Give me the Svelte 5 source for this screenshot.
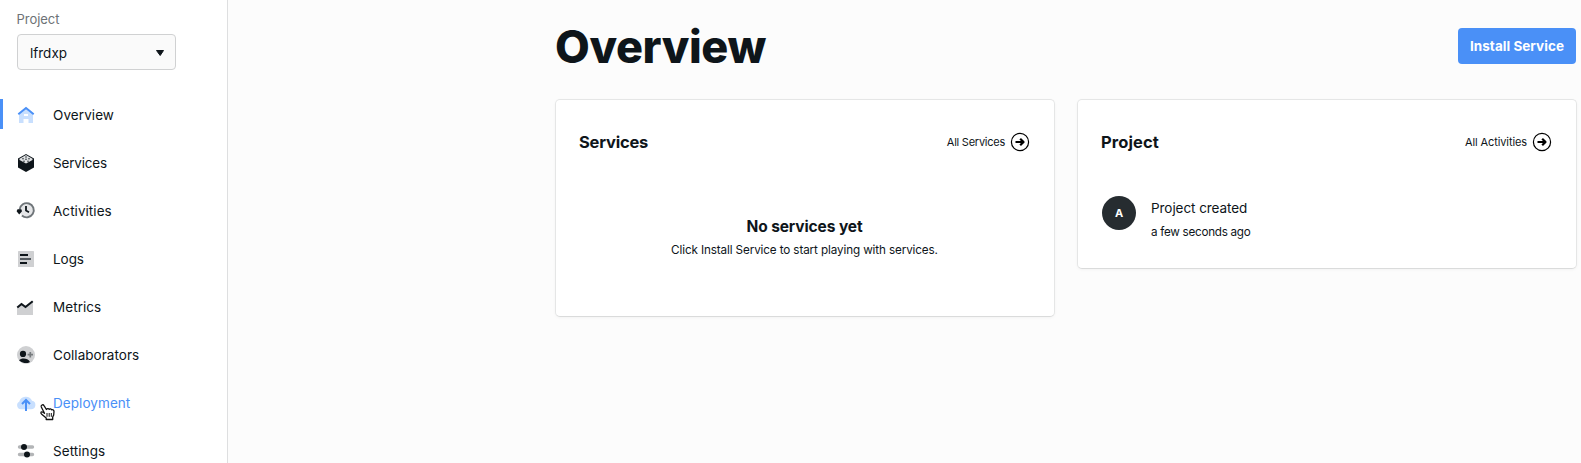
<script>
  const nav = [
    { name: 'Overview', icon: 'home', spacing: 0.08, active: true },
    { name: 'Services', icon: 'box', spacing: -0.17 },
    { name: 'Activities', icon: 'history', spacing: 0.05 },
    { name: 'Logs', icon: 'logs', spacing: -0.05 },
    { name: 'Metrics', icon: 'chart', spacing: 0.05 },
    { name: 'Collaborators', icon: 'person', spacing: 0.04 },
    { name: 'Deployment', icon: 'cloud', spacing: 0.07, hover: true },
    { name: 'Settings', icon: 'sliders', spacing: 0.06 }
  ];
</script>

{#snippet arrow()}
  <svg class="arrow" viewBox="0 0 20 20" aria-hidden="true">
    <circle cx="10" cy="10" r="8.6" fill="none" stroke="#000" stroke-width="1.2" />
    <path d="M5.500 10H13M10.200 6.700L13.500 10l-3.300 3.300" fill="none" stroke="#000" stroke-width="2.200" stroke-linejoin="round" />
  </svg>
{/snippet}

{#snippet glyph(kind)}
  <svg class="glyph" viewBox="0 0 20 20" aria-hidden="true">
    {#if kind === 'home'}
      <path d="M3 8.500L10 3l7 5.500V18h-4.500v-4h-5v4H3z" fill="#c8dffe" />
      <path d="M8 9h4v2H8z" fill="#fff" />
      <path d="M2.300 9.200L10 3l7.700 6.200" fill="none" stroke="#4a90f7" stroke-width="2" />
    {:else if kind === 'box'}
      <path d="M10 1l8 4.400v9L10 19l-8-4.600v-9z" fill="#0e151a" />
      <path d="M10 2l6.500 3.700v1.200L10 10.600 3.500 6.900V5.700z" fill="#dfe1e3" />
      <g fill="#0e151a" opacity=".85"><circle cx="10" cy="4" r=".8" /><circle cx="7" cy="5.800" r=".8" /><circle cx="13" cy="5.800" r=".8" /><circle cx="10" cy="6.300" r=".8" /><circle cx="8" cy="8.200" r=".8" /><circle cx="12" cy="8.200" r=".8" /></g>
    {:else if kind === 'history'}
      <circle cx="10.500" cy="9" r="7" fill="#e5e6e8" />
      <path d="M3.600 8.500a7.100 7.100 0 1 1 2.300 6" fill="none" stroke="#6f7579" stroke-width="1.900" />
      <path d="M1.500 8.200h3.800l.7 2-2.800 3.200-2.600-3.200z" fill="#0e151a" />
      <path d="M10 5v4.600l3 1.700" fill="none" stroke="#0e151a" stroke-width="1.800" />
    {:else if kind === 'logs'}
      <rect x="2" y="2" width="16" height="16" rx=".6" fill="#cfd0d2" />
      <path d="M4 6h8M4 14h7" stroke="#0e151a" stroke-width="2" />
      <path d="M4 10h11" stroke="#555b60" stroke-width="2" />
    {:else if kind === 'chart'}
      <path d="M1 10l5-3 4 3 7-6v14H1z" fill="#cfd0d2" />
      <path d="M1.300 10.500L5.500 7l4 3L16.700 4.200" fill="none" stroke="#0e151a" stroke-width="2.100" />
    {:else if kind === 'person'}
      <circle cx="10" cy="10" r="9" fill="#cfd0d2" />
      <circle cx="7" cy="8.900" r="3.100" fill="#0e151a" />
      <path d="M3 15.300c2.500-2.500 8.500-2.500 11 1.600A9 9 0 0 1 3 15.300z" fill="#0e151a" />
      <path d="M14.300 7v5.400M11.600 9.700h5.400" stroke="#777b7e" stroke-width="1.700" />
    {:else if kind === 'cloud'}
      <path d="M5 16.200A4 4 0 0 1 3.200 8.700 6.800 6.800 0 0 1 16 7.700 4.300 4.300 0 0 1 15 16.200z" fill="#c8dffe" />
      <path d="M10 18V7.300M6 11l4-4 4 4" fill="none" stroke="#4a90f7" stroke-width="2" />
    {:else}
      <path d="M3.500 6h13M3.500 13.500h13" stroke="#b3b5b7" stroke-width="3.400" stroke-linecap="round" />
      <circle cx="8" cy="6" r="3" fill="#0e151a" /><circle cx="11" cy="13.500" r="3" fill="#0e151a" />
    {/if}
  </svg>
{/snippet}

<div class="app">
  <aside>
    <div class="label">Project</div>
    <button class="select"><span>lfrdxp</span><svg width="10" height="8" viewBox="0 0 10 8"><path d="M1.500 1.500h7L5.200 6.500z" fill="#0e151a" stroke="#0e151a" stroke-linejoin="round" /></svg></button>
    <nav>
      {#each nav as item}
        <div class="item" class:active={item.active} class:hover={item.hover}>
          {@render glyph(item.icon)}
          <span style="letter-spacing: {item.spacing}px">{item.name}</span>
        </div>
      {/each}
    </nav>
    <svg class="pointer" width="18" height="20" viewBox="0 0 18 20" aria-hidden="true">
      <path d="M6.500 12.300L3.300 6C2.500 4.200 5 2.800 6 4.600L8.400 8.500C9 7.300 10.700 7.300 11.100 8.400 11.700 7.400 13.300 7.700 13.600 8.800 15 8.300 16 9.400 16 10.500L15.700 14 14.700 16V18.500H8.200V17L4 13.600C2 12 2.900 10 5 11.200z" fill="#fff" stroke="#111" stroke-width="1.300" stroke-linejoin="round" />
      <path d="M9 12v3.800M11.200 12v3.800M13.300 12v3.800" stroke="#111" />
    </svg>
  </aside>
  <main>
    <header><h1>Overview</h1><button class="install">Install Service</button></header>
    <div class="cards">
      <section class="services">
        <div class="head"><h2 class="sv">Services</h2><div class="link ls">All Services {@render arrow()}</div></div>
        <div class="empty"><h3>No services yet</h3><p>Click Install Service to start playing with services.</p></div>
      </section>
      <section class="project">
        <div class="head"><h2 class="pj">Project</h2><div class="link la">All Activities {@render arrow()}</div></div>
        <div class="event"><div class="avatar">A</div><div><div class="what">Project created</div><div class="when">a few seconds ago</div></div></div>
      </section>
    </div>
  </main>
</div>

<style>
  .app { display: flex; height: 463px; overflow: hidden; font-family: Inter, sans-serif; color: #0e151a; background: #fcfcfc; }
  .app * { box-sizing: border-box; }
  button { font: inherit; border: 0; }
  h1, h2, h3, p { margin: 0; }
  aside { position: relative; width: 228px; flex: none; background: #fff; border-right: 1px solid #dedfe0; padding-top: 10px; }
  .label { padding-left: 16.500px; font-size: 13px; line-height: 19px; color: #6d7276; letter-spacing: -.05px; }
  .select { display: flex; align-items: center; justify-content: space-between; width: 159px; height: 36px; margin: 5px 0 0 17px; padding: 1px 10px 0 12px; border: 1px solid #d0d1d2; border-radius: 4px; background: #fafafa; color: #0e151a; font-size: 13.5px; }
  nav { margin-top: 21px; }
  .item { display: flex; align-items: center; height: 48px; padding-left: 16px; font-size: 13.5px; line-height: 20px; position: relative; }
  .item span { margin-left: 17px; }
  .item.active::before { content: ''; position: absolute; left: 0; top: 8px; width: 3px; height: 30px; background: #4a90f7; }
  .item.hover { color: #4a90f7; }
  .glyph { width: 20px; height: 20px; flex: none; }
  .pointer { position: absolute; left: 38px; top: 401px; }
  main { flex: 1; padding: 28px 4px 0 328px; }
  header { display: flex; justify-content: space-between; align-items: flex-start; height: 71px; }
  h1 { font-size: 45px; font-weight: 800; line-height: 37px; letter-spacing: -.4px; margin-left: -1px; }
  .install { width: 118px; height: 36px; padding: 0 0 1px; margin-right: 1px; border-radius: 4px; background: #4a90f7; color: #fff; font-size: 13.5px; font-weight: 700; letter-spacing: .04px; }
  .cards { display: grid; grid-template-columns: 500px 500px; gap: 22px; align-items: start; margin-left: -1px; }
  section { background: #fff; border: 1px solid #e5e6e6; border-bottom-color: #dadbdb; border-radius: 5px; box-shadow: 0 1px 3px #0000000a; padding: 0 24px 0 23px; }
  .services { height: 218px; }
  .project { height: 170px; }
  .head { display: flex; justify-content: space-between; align-items: center; padding-top: 32px; height: 52px; }
  h2 { font-size: 16.5px; line-height: 20px; }
  .sv { letter-spacing: -.2px; }
  .pj { letter-spacing: .1px; }
  .link { display: flex; align-items: center; gap: 5px; font-size: 11px; line-height: 20px; }
  .ls { letter-spacing: -.25px; }
  .la { letter-spacing: -.1px; }
  .arrow { width: 20px; height: 20px; }
  .empty { text-align: center; padding-top: 65px; }
  h3 { font-size: 15.5px; line-height: 20px; letter-spacing: -.1px; }
  .empty p { font-size: 11.7px; line-height: 16px; letter-spacing: -.12px; margin-top: 5px; }
  .event { display: flex; padding-top: 44px; }
  .avatar { width: 34px; height: 34px; margin-left: 1px; border-radius: 50%; background: #262c30; color: #fff; font-size: 11px; font-weight: 700; line-height: 34px; text-align: center; flex: none; }
  .event > div:last-child { margin-left: 15px; }
  .what { font-size: 13.5px; line-height: 20px; letter-spacing: -.06px; margin-top: 2px; }
  .when { font-size: 11.7px; line-height: 18px; letter-spacing: -.28px; margin-top: 5px; }
</style>
